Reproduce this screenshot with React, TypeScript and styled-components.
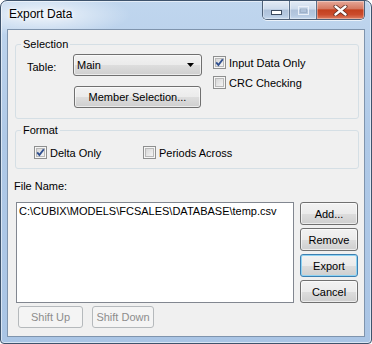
import React from 'react';
import styled, { createGlobalStyle } from 'styled-components';

const GlobalStyle = createGlobalStyle`
  html, body {
    margin: 0;
    padding: 0;
    background: #ffffff;
    overflow: hidden;
  }
  body {
    font-family: "Liberation Sans", Arial, sans-serif;
    font-size: 11px;
    color: #000;
  }
`;

const Window = styled.div`
  width: 372px;
  height: 344px;
  box-sizing: border-box;
  border: 1px solid #3e536c;
  border-radius: 7px 7px 4px 4px;
  padding: 0 6px 6px 6px;
  display: flex;
  flex-direction: column;
  background:
    radial-gradient(ellipse 90px 22px at 40px 14px, rgba(255, 255, 255, 0.75), rgba(255, 255, 255, 0) 100%),
    linear-gradient(180deg, #c0d6ee 0%, #afc9e7 40%, #aac5e5 100%);
  box-shadow: inset 0 0 0 1px rgba(255, 255, 255, 0.55);
`;

const TitleBar = styled.div`
  height: 28px;
  display: flex;
  align-items: flex-start;
`;

const Title = styled.div`
  padding-top: 6px;
  padding-left: 2px;
  font-size: 12px;
  line-height: 15px;
  color: #000;
  text-shadow: 0 0 6px #fff, 0 0 3px #fff;
`;

const CaptionGroup = styled.div`
  margin-left: auto;
  display: flex;
  height: 19px;
  box-sizing: border-box;
  border: 1px solid #4f6178;
  border-top: none;
  border-radius: 0 0 5px 5px;
  overflow: hidden;
  box-shadow: 0 1px 0 rgba(255, 255, 255, 0.7);
`;

const CaptionButton = styled.div<{ $w: number; $close?: boolean }>`
  width: ${p => p.$w}px;
  height: 100%;
  display: flex;
  align-items: center;
  justify-content: center;
  & + & {
    border-left: 1px solid #5a6f89;
  }
  background: ${p =>
    p.$close
      ? 'linear-gradient(180deg, #e6a899 0%, #d67a63 42%, #c4401f 50%, #cb4b2c 75%, #dd7e62 100%)'
      : 'linear-gradient(180deg, #e3ebf5 0%, #cddbec 45%, #aec1d9 50%, #b5c9e1 80%, #c7d9ed 100%)'};
  box-shadow: inset 0 0 0 1px rgba(255, 255, 255, 0.35);
`;

const Client = styled.div`
  flex: 1;
  border: 1px solid #7f94ad;
  background: #f0f0f0;
  display: flex;
  flex-direction: column;
  padding: 8px 5px 0 6px;
`;

const Group = styled.fieldset<{ $top?: number }>`
  margin: ${p => p.$top ?? 0}px 0 0 1px;
  padding: 0;
  border: 1px solid #d5dfe5;
  border-radius: 3px;
  min-width: 0;
`;

const GroupLabel = styled.legend`
  margin-left: 5px;
  padding: 0 2px;
  line-height: 13px;
`;

const SelectionBody = styled.div`
  display: grid;
  grid-template-columns: 46px 129px auto;
  grid-template-rows: 22px 22px;
  row-gap: 10px;
  padding: 3px 0 10px 11px;
`;

const FieldLabel = styled.div`
  padding-top: 7px;
  line-height: 13px;
`;

const Combo = styled.div`
  display: flex;
  align-items: center;
  justify-content: space-between;
  box-sizing: border-box;
  height: 22px;
  padding: 0 7px 0 3px;
  border: 1px solid #707070;
  border-radius: 3px;
  background: linear-gradient(180deg, #f2f2f2 0%, #ebebeb 50%, #dddddd 51%, #cfcfcf 100%);
  box-shadow: inset 0 0 0 1px rgba(255, 255, 255, 0.6);
`;

const Button = styled.div<{ $default?: boolean; $disabled?: boolean; $w?: number; $h?: number }>`
  box-sizing: border-box;
  width: ${p => (p.$w ? `${p.$w}px` : 'auto')};
  height: ${p => p.$h ?? 23}px;
  display: flex;
  align-items: center;
  justify-content: center;
  border-radius: 3px;
  border: 1px solid ${p => (p.$disabled ? '#b5b9bc' : p.$default ? '#3c7fb1' : '#707070')};
  color: ${p => (p.$disabled ? '#8d8d8d' : '#000')};
  background: ${p =>
    p.$disabled
      ? '#f4f4f4'
      : 'linear-gradient(180deg, #f2f2f2 0%, #ebebeb 50%, #dddddd 51%, #cfcfcf 100%)'};
  box-shadow: ${p =>
    p.$default
      ? 'inset 0 0 0 1px #8fd3f3'
      : p.$disabled
      ? 'none'
      : 'inset 0 0 0 1px rgba(255, 255, 255, 0.6)'};
`;

const MemberButton = styled(Button)`
  grid-column: 2;
  grid-row: 2;
  margin-left: 1px;
  width: 127px;
`;

const Checks = styled.div`
  grid-column: 3;
  grid-row: 1 / span 2;
  margin-left: 11px;
  display: flex;
  flex-direction: column;
  gap: 3px;
`;

const CheckRow = styled.label<{ $w?: number }>`
  display: flex;
  align-items: center;
  gap: 3px;
  height: 17px;
  width: ${p => (p.$w ? `${p.$w}px` : 'auto')};
  white-space: nowrap;
`;

const Box = styled.span`
  position: relative;
  flex: none;
  width: 13px;
  height: 13px;
  box-sizing: border-box;
  border: 1px solid #8e8f8f;
  background: linear-gradient(135deg, #cfcfcf 0%, #e6e6e6 50%, #fbfbfb 100%);
  box-shadow: inset 0 0 0 1px #f6f6f6, inset 0 0 0 2px #b9b9b9;
  svg {
    position: absolute;
    left: 0;
    top: 0;
  }
`;

const FormatBody = styled.div`
  display: flex;
  padding: 7px 0 7px 18px;
`;

const FileLabel = styled.div`
  margin-top: 11px;
  line-height: 13px;
`;

const FileArea = styled.div`
  margin-top: 9px;
  margin-left: 2px;
  display: flex;
  gap: 6px;
`;

const ListBox = styled.div`
  width: 278px;
  height: 101px;
  box-sizing: border-box;
  border: 1px solid #828790;
  background: #fff;
  padding: 2px 2px;
  line-height: 13px;
  white-space: nowrap;
`;

const SideButtons = styled.div`
  display: flex;
  flex-direction: column;
  gap: 3px;
`;

const BottomRow = styled.div`
  margin-top: 3px;
  margin-left: 4px;
  display: flex;
  gap: 9px;
`;

function Check({ label, checked, width }: { label: string; checked?: boolean; width?: number }) {
  return (
    <CheckRow $w={width}>
      <Box>
        {checked && (
          <svg width="11" height="11" viewBox="0 0 11 11">
            <path d="M2.2 5.4 L4.4 8 L8.8 2.2" fill="none" stroke="#2f4f8f" strokeWidth="1.9" />
          </svg>
        )}
      </Box>
      <span>{label}</span>
    </CheckRow>
  );
}

export default function App() {
  return (
    <>
      <GlobalStyle />
      <Window>
        <TitleBar>
          <Title>Export Data</Title>
          <CaptionGroup>
            <CaptionButton $w={26}>
              <svg width="11" height="6" viewBox="0 0 11 6" style={{ marginTop: 5 }}>
                <rect x="0.5" y="0.5" width="10" height="4" fill="#fff" stroke="#3b4a5e" />
              </svg>
            </CaptionButton>
            <CaptionButton $w={26}>
              <svg width="11" height="9" viewBox="0 0 11 9">
                <rect x="0.5" y="0.5" width="10" height="8" fill="none" stroke="#eef3f9" opacity="0.9" />
                <rect x="2.5" y="3" width="6" height="3.5" fill="none" stroke="#9fb1c8" />
              </svg>
            </CaptionButton>
            <CaptionButton $w={47} $close>
              <svg width="15" height="11" viewBox="0 0 15 11">
                <path d="M2.5 1.5 L12.5 9.5 M12.5 1.5 L2.5 9.5" stroke="#5a2a20" strokeWidth="4" strokeLinecap="round" />
                <path d="M2.5 1.5 L12.5 9.5 M12.5 1.5 L2.5 9.5" stroke="#ffffff" strokeWidth="2.4" strokeLinecap="round" />
              </svg>
            </CaptionButton>
          </CaptionGroup>
        </TitleBar>
        <Client>
          <Group>
            <GroupLabel>Selection</GroupLabel>
            <SelectionBody>
              <FieldLabel>Table:</FieldLabel>
              <Combo>
                <span>Main</span>
                <svg width="7" height="4" viewBox="0 0 7 4">
                  <polygon points="0,0 7,0 3.5,4" fill="#000" />
                </svg>
              </Combo>
              <Checks>
                <Check label="Input Data Only" checked />
                <Check label="CRC Checking" />
              </Checks>
              <MemberButton $h={22}>Member Selection...</MemberButton>
            </SelectionBody>
          </Group>
          <Group $top={5}>
            <GroupLabel>Format</GroupLabel>
            <FormatBody>
              <Check label="Delta Only" checked width={109} />
              <Check label="Periods Across" />
            </FormatBody>
          </Group>
          <FileLabel>File Name:</FileLabel>
          <FileArea>
            <ListBox>{'C:\\CUBIX\\MODELS\\FCSALES\\DATABASE\\temp.csv'}</ListBox>
            <SideButtons>
              <Button $w={58}>Add...</Button>
              <Button $w={58}>Remove</Button>
              <Button $w={58} $default>Export</Button>
              <Button $w={58}>Cancel</Button>
            </SideButtons>
          </FileArea>
          <BottomRow>
            <Button $disabled $w={65} $h={22}>Shift Up</Button>
            <Button $disabled $w={62} $h={22}>Shift Down</Button>
          </BottomRow>
        </Client>
      </Window>
    </>
  );
}
